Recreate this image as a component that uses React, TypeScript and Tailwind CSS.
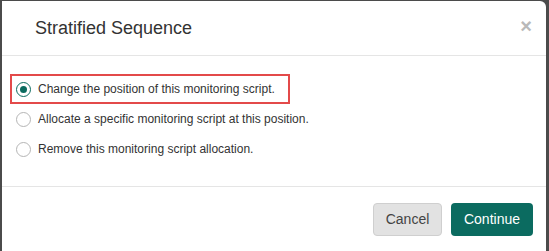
import { useState } from "react";

const options = [
  "Change the position of this monitoring script.",
  "Allocate a specific monitoring script at this position.",
  "Remove this monitoring script allocation.",
];

function Radio({ checked }: { checked: boolean }) {
  return (
    <span
      className={`flex h-[15px] w-[15px] shrink-0 items-center justify-center rounded-full border bg-white ${
        checked ? "border-[#0b6b5f]" : "border-[#b5b5b5]"
      }`}
    >
      {checked && <span className="h-[7px] w-[7px] rounded-full bg-[#0b6b5f]" />}
    </span>
  );
}

export default function App() {
  const [selected, setSelected] = useState(0);

  return (
    <div
      className="h-[251px] w-[549px] overflow-hidden bg-[#4b4b4b] pl-[2px] pr-[3px] pt-[1px]"
      style={{ fontFamily: '"Liberation Sans", Arial, sans-serif' }}
    >
      <div className="h-[260px] rounded-tr-[6px] bg-white">
        {/* header */}
        <div className="flex h-[55px] items-center justify-between border-b border-[#e5e5e5] pl-[33px] pr-[14px]">
          <h4 className="text-[18px] text-[#333]">Stratified Sequence</h4>
          <button className="pb-[4px] text-[20px] font-bold leading-none text-[#b9b9b9]">×</button>
        </div>

        {/* body */}
        <div className="flex h-[131px] flex-col border-b border-[#e5e5e5] pl-[8px] pt-[18px]">
          {options.map((label, i) => (
            <label
              key={label}
              onClick={() => setSelected(i)}
              className={`flex h-[30px] w-fit cursor-pointer items-center gap-[7px] pl-[4px] pr-[13px] text-[12px] text-[#333] ${
                i === 0 ? "border-2 border-[#e34a4a]" : "border-2 border-transparent"
              }`}
            >
              <Radio checked={selected === i} />
              <span>{label}</span>
            </label>
          ))}
        </div>

        {/* footer */}
        <div className="flex justify-end gap-[9px] pr-[13px] pt-[16px]">
          <button className="h-[33px] w-[69px] rounded-[4px] border border-[#cfcfcf] bg-[#e2e2e2] text-[14px] text-[#444]">
            Cancel
          </button>
          <button className="h-[33px] w-[82px] rounded-[4px] bg-[#0b6b60] text-[14px] text-white">
            Continue
          </button>
        </div>
      </div>
    </div>
  );
}
